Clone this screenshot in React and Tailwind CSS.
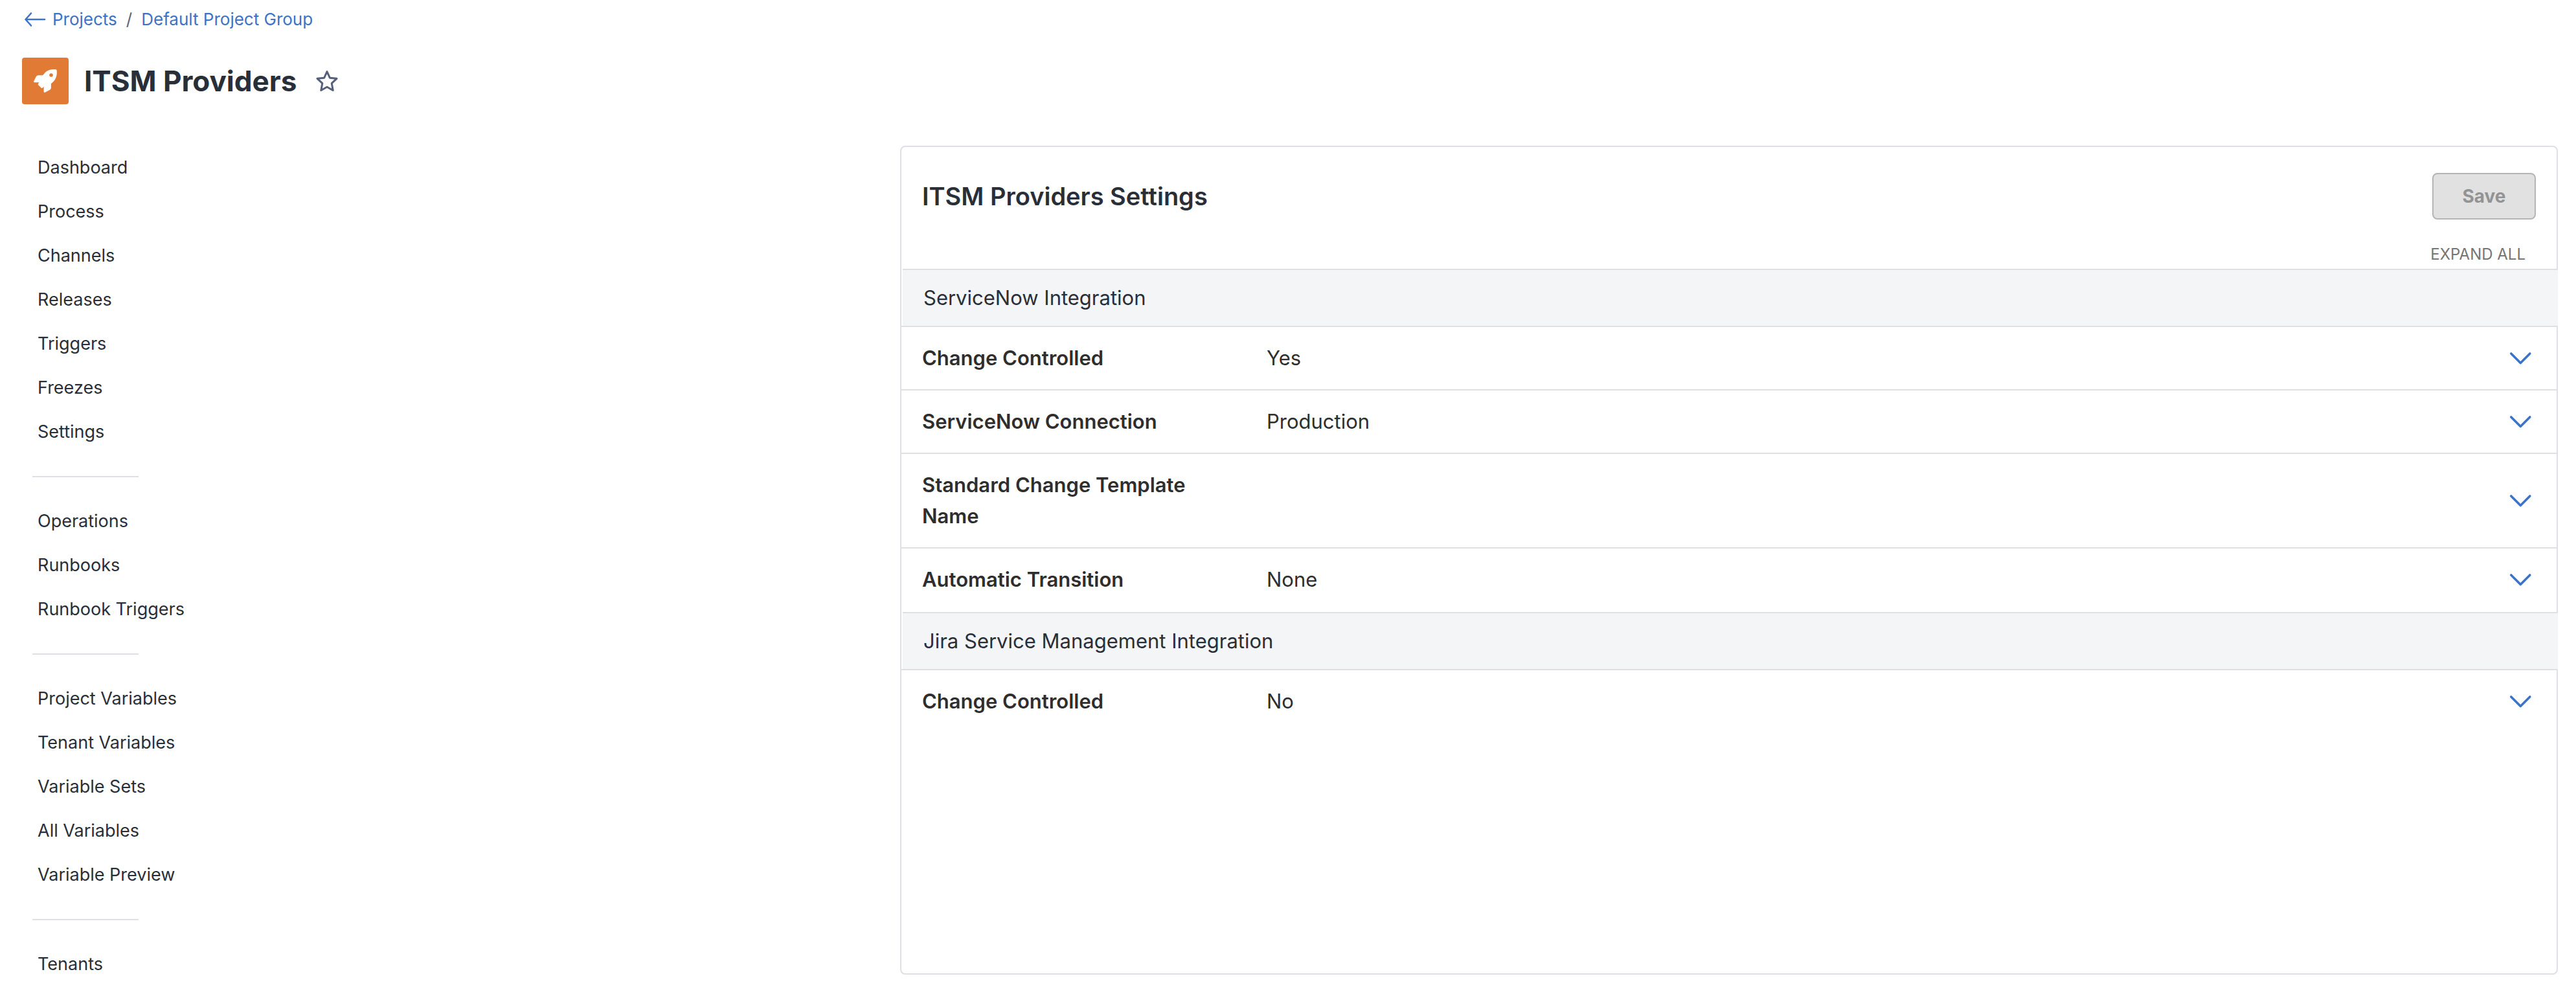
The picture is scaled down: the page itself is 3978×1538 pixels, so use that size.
const navGroups = [
  ["Dashboard", "Process", "Channels", "Releases", "Triggers", "Freezes", "Settings"],
  ["Operations", "Runbooks", "Runbook Triggers"],
  ["Project Variables", "Tenant Variables", "Variable Sets", "All Variables", "Variable Preview"],
  ["Tenants"],
];

const sections = [
  {
    title: "ServiceNow Integration",
    rows: [
      { label: "Change Controlled", value: "Yes" },
      { label: "ServiceNow Connection", value: "Production" },
      { label: "Standard Change Template Name", value: "" },
      { label: "Automatic Transition", value: "None" },
    ],
  },
  {
    title: "Jira Service Management Integration",
    rows: [{ label: "Change Controlled", value: "No" }],
  },
];

function ArrowLeft() {
  return (
    <svg viewBox="0 0 34 24" className="h-6 w-[34px]" fill="none" stroke="currentColor" strokeWidth="2.6" strokeLinecap="round" strokeLinejoin="round" aria-hidden="true">
      <path d="M32 12H2.500M11 2.500L2.500 12l8.500 9.500" />
    </svg>
  );
}

function Rocket() {
  return (
    <svg viewBox="0 0 36 36" className="size-9" aria-hidden="true">
      <path
        fill="#fff"
        fillRule="evenodd"
        d="M34.500 0.300C28.500 -0.500 23 0.800 18.500 4.200L14 9.200H7.500Q4.800 9.200 3.600 11.500L0.200 18.600Q-0.200 20.300 1.400 20.300H8.700Q6.700 21.800 6.700 23.700L12.300 29.200Q14 29 15.600 26.800V34.600Q15.900 36.300 17.500 35.700L24.500 32Q26.800 30.800 26.900 28.500V22.200C33.500 18 36.800 10 35.600 1.400Q35.400 0.500 34.500 0.300ZM27 6.200a2.800 2.800 0 1 0 0.010 0Z"
      />
    </svg>
  );
}

function Star() {
  return (
    <svg viewBox="0 0 34 34" className="size-[34px]" fill="none" stroke="currentColor" strokeWidth="3" strokeLinejoin="round" aria-hidden="true">
      <path d="M17 2.500L21.300 12.200L32 13.300L24.200 20.600L26.200 31.500L17 26.300L7.800 31.500L9.800 20.600L2 13.300L12.700 12.200Z" />
    </svg>
  );
}

function ChevronDown() {
  return (
    <svg viewBox="0 0 48 48" className="size-12" fill="none" stroke="currentColor" strokeWidth="3.6" strokeLinecap="round" strokeLinejoin="round" aria-hidden="true">
      <path d="M9.800 17L24.300 31.500L38.800 17" />
    </svg>
  );
}

function Sidebar() {
  return (
    <nav aria-label="Project" className="min-w-64 grow">
      {navGroups.map((items, i) => (
        <div key={items[0]}>
          {i > 0 && <hr className="my-[34px] ml-4 w-[164px] border-t-2 border-[#dfdfe7]" />}
          <ul>
            {items.map((item) => (
              <li key={item}>
                <a href="#" className="block py-4 pl-6 text-[27px] leading-9">
                  {item}
                </a>
              </li>
            ))}
          </ul>
        </div>
      ))}
    </nav>
  );
}

function Section({ title, rows }) {
  return (
    <section>
      <h3 className="ml-0.5 -mr-0.5 border-t-2 border-[#e0e0e2] bg-[#f4f5f7] py-[19px] pl-8 text-[31px] leading-[48px]">
        {title}
      </h3>
      <div className="pb-0.5 text-[#2e2e2e]">
        {rows.map(({ label, value }) => (
          <div key={label} className="flex items-center border-t-2 border-[#e0e0e2] px-8 py-6 text-[31px] leading-[48px]">
            <div className="w-[532px] shrink-0 pr-12 font-semibold">{label}</div>
            <div className="grow">{value}</div>
            <button type="button" aria-label={`Expand ${label}`} className="text-[#3c73c6]">
              <ChevronDown />
            </button>
          </div>
        ))}
      </div>
    </section>
  );
}

export default function App() {
  return (
    <div className="min-h-screen bg-white pr-7 pl-[34px] font-['Inter',sans-serif] text-[#282f38]">
      <nav aria-label="Breadcrumb" className="flex items-center gap-3 pt-3 text-[26px] leading-9 text-[#3c73c6]">
        <a href="#" className="flex items-center gap-2.5 pl-[3px]">
          <ArrowLeft />
          Projects
        </a>
        <span className="px-0.5 text-[#5b6478]">/</span>
        <a href="#">Default Project Group</a>
      </nav>

      <header className="mt-[41px] flex items-center">
        <span className="flex size-[72px] items-center justify-center rounded bg-[#e07a35]">
          <Rocket />
        </span>
        <h1 className="pl-6 text-[44px] leading-[72px] font-bold">ITSM Providers</h1>
        <button type="button" aria-label="Add to favorites" className="ml-[30px] text-[#56607a]">
          <Star />
        </button>
      </header>

      <div className="mt-16 flex items-start">
        <Sidebar />
        <main className="min-h-[1280px] w-full max-w-[2560px] rounded-lg border-2 border-[#dfdfe7]">
          <div className="flex items-center justify-between px-8 pt-10">
            <h2 className="text-[38px] leading-[72px] font-semibold">ITSM Providers Settings</h2>
            <button type="button" disabled className="h-[72px] w-40 rounded-lg border-2 border-[#b5b5b5] bg-[#e1e1e1] text-[28px] font-bold text-[#939393]">
              Save
            </button>
          </div>
          <div className="mt-8 flex justify-end pr-12">
            <button type="button" className="text-2xl leading-[44px] text-[#757575]">
              EXPAND ALL
            </button>
          </div>
          {sections.map((section) => (
            <Section key={section.title} {...section} />
          ))}
        </main>
      </div>
    </div>
  );
}
